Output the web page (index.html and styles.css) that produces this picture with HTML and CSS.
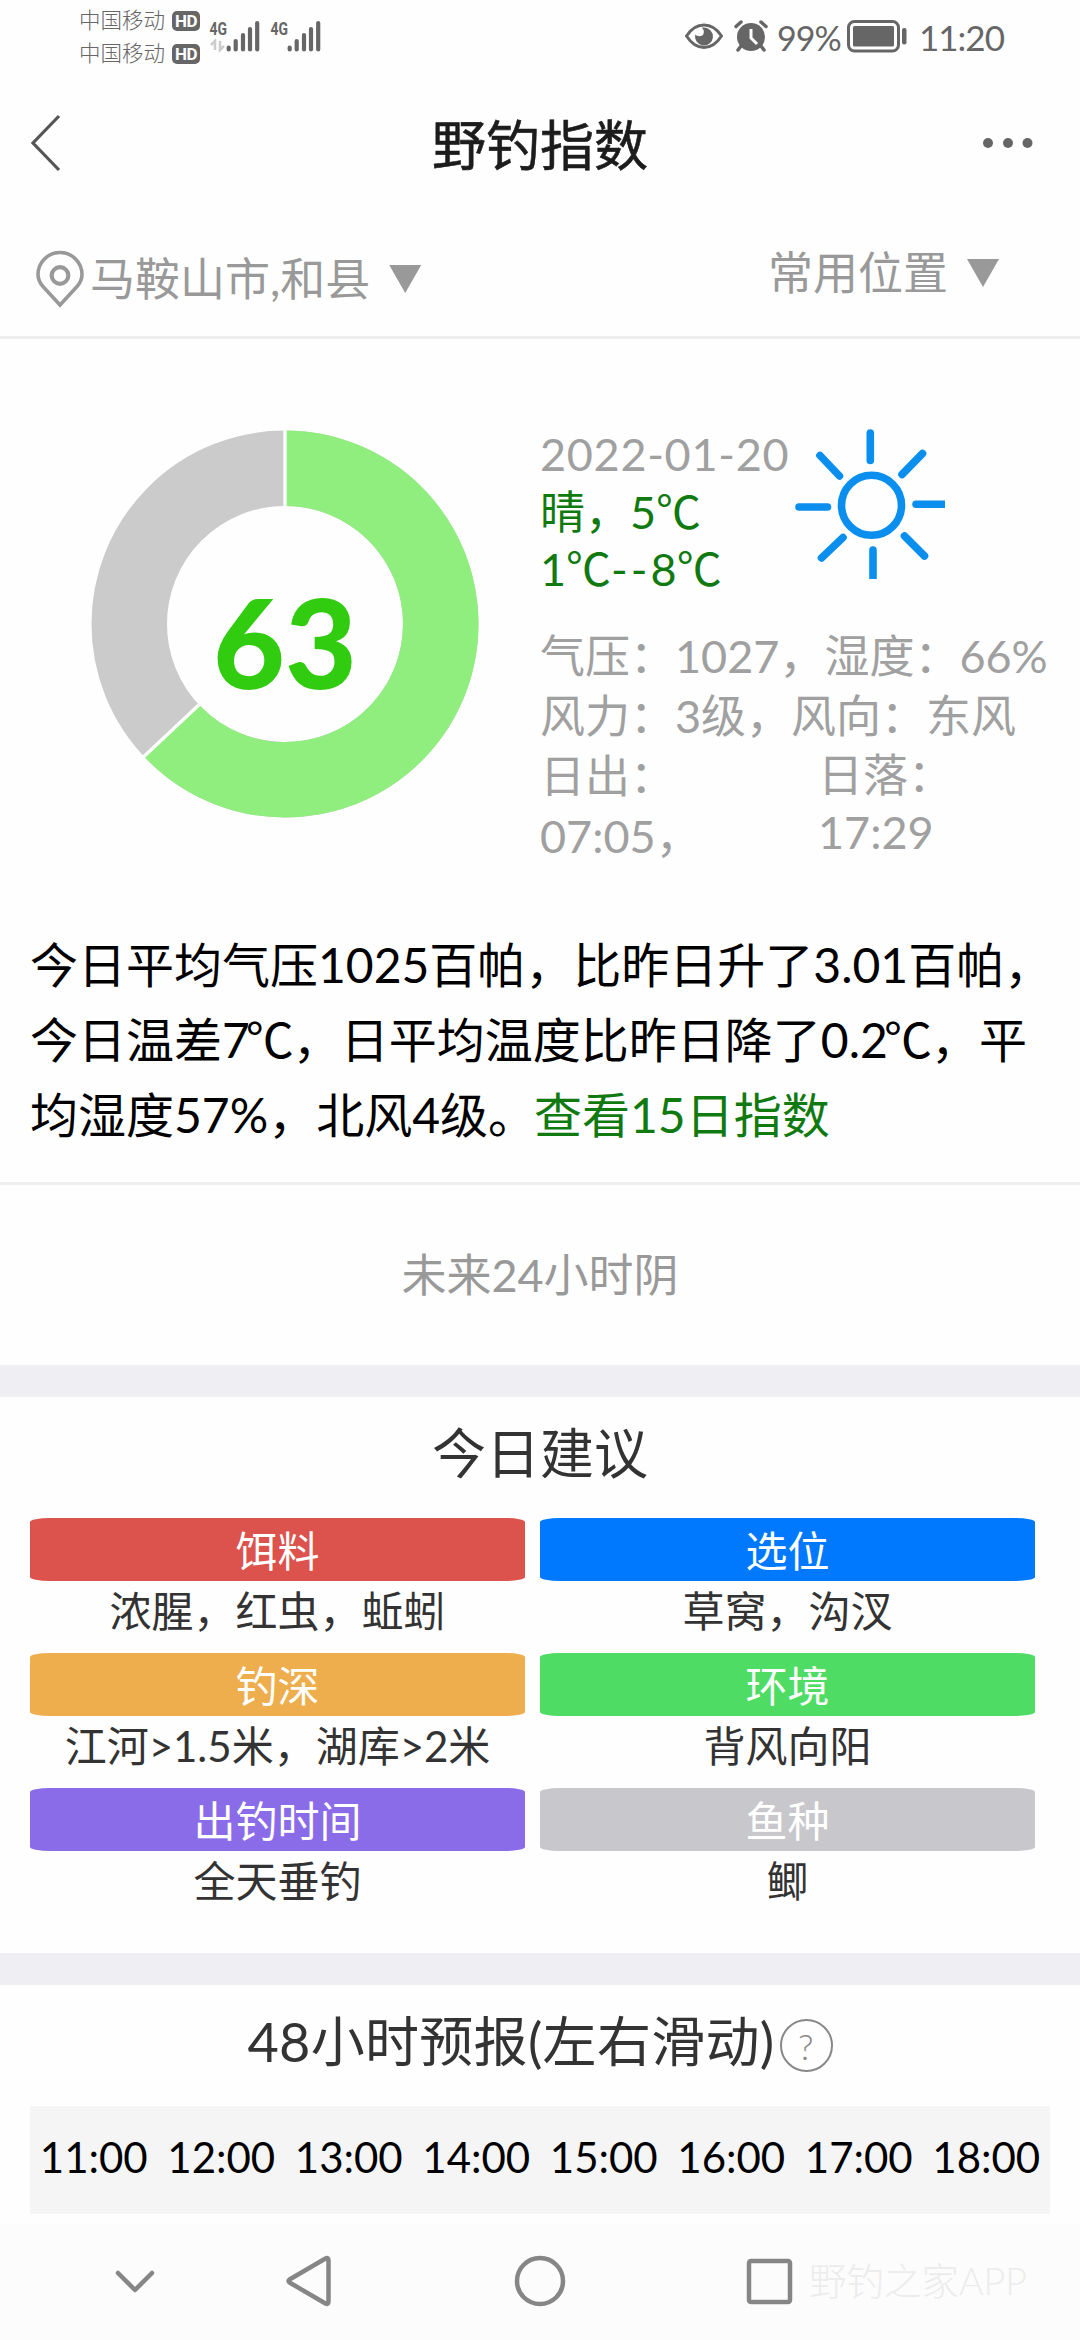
FILE: index.html
```html
<!DOCTYPE html>
<html lang="zh-CN">
<head>
<meta charset="utf-8">
<title>野钓指数</title>
<link rel="stylesheet" href="styles.css">
</head>
<body>
<div class="screen">
  <div class="status">
    <div class="carriers">
      <div class="carrier"><span>中国移动</span><b class="hd">HD</b></div>
      <div class="carrier"><span>中国移动</span><b class="hd">HD</b></div>
    </div>
    <svg class="signals" width="112" height="36" viewBox="210 18 112 36">
      <g class="net-label"><text x="210.5" y="35" textLength="17.5" lengthAdjust="spacingAndGlyphs">4G</text><text x="271.5" y="35" textLength="17.5" lengthAdjust="spacingAndGlyphs">4G</text></g>
      <g class="bars">
        <path d="M229.7 47.5v2M236.7 41v8.500M244 35v14.500M251 29v20.500M258.200 23v26.500"/>
        <path d="M290.700 47.500v2M297.700 41v8.500M305 35v14.500M312 29v20.500M319.200 23v26.500"/>
      </g>
      <path class="data" d="M216 50V41l-4 4M221 41v9l4-4"/>
    </svg>
    <div class="status-right">
      <svg class="eye" width="38" height="28" viewBox="0 0 38 28"><path d="M1.500 14C6 7 12 3 19 3s13 4 17.500 11C32 21 26 25.500 19 25.500S6 21 1.500 14z" fill="none" stroke="#666" stroke-width="3"/><path d="M19 5.500a9 9 0 1 1-8.800 7c2 2 6.500 2.500 8 0 1.300-2.500.7-5-1.400-6.700.7-.2 1.500-.3 2.200-.3z" fill="#666"/></svg>
      <svg class="alarm" width="34" height="32" viewBox="0 0 34 32"><circle cx="17" cy="17" r="14" fill="#666"/><path d="M2 6.500l5-4.500M32 6.500L27 2M7 26l-3 4M27 26l3 4" stroke="#666" stroke-width="3.500" stroke-linecap="round"/><path d="M17 9v9l6 6" fill="none" stroke="#fefefe" stroke-width="3"/></svg>
      <span class="pct">99%</span>
      <svg class="battery" width="60" height="33" viewBox="0 0 60 33"><rect x="1.500" y="1.500" width="50" height="29.500" rx="6" fill="none" stroke="#666" stroke-width="3"/><rect x="6" y="6" width="41" height="20.500" rx="1.500" fill="#666"/><rect x="55" y="8" width="4.500" height="16.500" rx="2" fill="#666"/></svg>
      <span class="clock">11:20</span>
    </div>
  </div>

  <header class="titlebar">
    <svg width="36" height="60" viewBox="0 0 36 60"><path d="M33 3L7 30l26 27" fill="none" stroke="#555" stroke-width="3.200"/></svg>
    <h1>野钓指数</h1>
    <svg width="54" height="14" viewBox="0 0 54 14" fill="#666"><circle cx="7" cy="7" r="5"/><circle cx="27" cy="7" r="5"/><circle cx="46.500" cy="7" r="5"/></svg>
  </header>

  <div class="places">
    <div class="place">
      <svg class="pin" width="50" height="58" viewBox="0 0 50 58" fill="none" stroke="#999" stroke-width="3.600"><path d="M25 55L8 36.500C4.500 32.500 3 29 3 24.500a22 22 0 0 1 44 0c0 4.500-1.500 8-5 12z"/><circle cx="25" cy="25.500" r="8.300" stroke-width="4.200"/></svg>
      <span>马鞍山市,和县</span><i class="tri"></i>
    </div>
    <div class="place saved"><span>常用位置</span><i class="tri"></i></div>
  </div>

  <section class="today">
    <svg class="donut" width="390" height="390" viewBox="-195 -195 390 390">
      <circle r="155.750" fill="none" stroke="#cbcbcb" stroke-width="75.500"/>
      <path d="M0-155.750A155.750 155.750 0 1 1-113.540 106.620" fill="none" stroke="#8fee7d" stroke-width="75.500"/>
      <path d="M0-115V-196M-83.800 78.700L-142.900 134.200" stroke="#fefefe" stroke-width="3.400"/>
      <text x="0" y="65" text-anchor="middle">63</text>
    </svg>
    <div class="weather">
      <div class="now">
        <div class="summary">
          <div class="date">2022-01-20</div>
          <div>晴，5℃</div>
          <div>1℃<span class="dash">--</span>8℃</div>
        </div>
        <svg class="sun" width="150" height="150" viewBox="795 429 150 150" fill="none" stroke="#0a8fee" stroke-width="7.600" stroke-linecap="round"><circle cx="871.500" cy="505.300" r="30"/><path d="M870.300 433v27.500M873 550v34M799 507h28.500M916 504.200h34M820 455.500l19.500 20.500M922.500 453.500L902 474.500M821.500 558L843 537.500M904.500 536l20 20"/></svg>
      </div>
      <div class="details">
        <div>气压：1027，湿度：66%</div>
        <div>风力：3级，风向：东风</div>
        <div class="sunrow">
          <div>日出：<br>07:05，</div>
          <div class="sunset">日落：<br>17:29</div>
        </div>
      </div>
    </div>
  </section>

  <p class="report">今日平均气压1025百帕，比昨日升了3.01百帕，<br>今日温差7<span class="unit">℃</span>，日平均温度比昨日降了0.2<span class="unit">℃</span>，平<br>均湿度57%，北风4级。<a>查看15日指数</a></p>
  <div class="next">未来24小时阴</div>

  <section class="block advice">
    <h2>今日建议</h2>
    <dl class="tips">
      <div><dt class="red">饵料</dt><dd>浓腥，红虫，蚯蚓</dd></div>
      <div><dt class="blue">选位</dt><dd>草窝，沟汊</dd></div>
      <div><dt class="orange">钓深</dt><dd>江河&gt;1.5米，湖库&gt;2米</dd></div>
      <div><dt class="green">环境</dt><dd>背风向阳</dd></div>
      <div><dt class="purple">出钓时间</dt><dd>全天垂钓</dd></div>
      <div><dt class="gray">鱼种</dt><dd>鲫</dd></div>
    </dl>
  </section>

  <section class="block forecast">
    <h2>48小时预报(左右滑动)<span class="help">?</span></h2>
    <div class="hours"><span>11:00</span><span>12:00</span><span>13:00</span><span>14:00</span><span>15:00</span><span>16:00</span><span>17:00</span><span>18:00</span></div>
  </section>

  <nav class="nav">
    <svg width="44" height="56" viewBox="0 0 44 56"><path d="M5 20l17 17 17-17"/></svg>
    <svg width="50" height="56" viewBox="0 0 50 56"><path d="M4.500 26.500Q2.500 28 4.500 29.500L40.500 50.500Q43.500 52 43.500 48.500V7.500Q43.500 4 40.500 5.500Z"/></svg>
    <svg width="54" height="56" viewBox="0 0 54 56"><circle cx="27" cy="28" r="23"/></svg>
    <svg width="50" height="56" viewBox="0 0 50 56"><rect x="5" y="8" width="41" height="41" rx="2"/></svg>
    <span class="mark">野钓之家APP</span>
  </nav>
</div>
</body>
</html>
```
FILE: styles.css
```css
* { box-sizing: border-box; margin: 0; padding: 0; }
body {
  width: 1080px;
  background: #fefefe;
  color: #333;
  font-family: Lato, "Noto Sans CJK SC", sans-serif;
}
.screen { display: flex; flex-direction: column; width: 1080px; height: 2340px; overflow: hidden; }
h1, h2 { font-weight: 400; }

.status { display: flex; align-items: flex-start; height: 84px; color: #666; }
.carriers { width: 130px; margin-left: 79px; padding-top: 4px; }
.carrier { display: flex; align-items: center; gap: 7px; height: 33px; font-size: 21.500px; line-height: 33px; font-weight: 300; }
.hd {
  width: 28px; height: 20px; border-radius: 5px; background: #666; color: #fefefe;
  font: 700 17px/20px Roboto, sans-serif; text-align: center; letter-spacing: -0.500px;
}
.signals { margin-top: 18px; }
.net-label { font: 700 19px Roboto, sans-serif; fill: #666; }
.bars { fill: none; stroke: #666; stroke-width: 4.200; stroke-linecap: round; }
.data { fill: none; stroke: #ccc; stroke-width: 2.500; }
.status-right { display: flex; margin-left: 364px; }
.status-right > * { flex: none; }
.eye { margin-top: 22px; }
.alarm { margin: 20px 0 0 11px; }
.pct { width: 79px; padding-left: 9px; font-size: 34px; line-height: 75px; letter-spacing: -1px; white-space: nowrap; }
.battery { margin-top: 20px; }
.clock { margin-left: 12px; font-size: 35px; line-height: 75px; letter-spacing: -1px; white-space: nowrap; }

.titlebar { display: flex; align-items: center; justify-content: space-between; height: 124px; padding: 0 45px 0 26px; }
.titlebar svg { position: relative; top: -3px; }
.titlebar h1 { margin-left: 37px; font-size: 54px; line-height: 124px; color: #1c1c1c; -webkit-text-stroke: 0.600px #1c1c1c; }

.places { display: flex; justify-content: space-between; height: 131px; border-bottom: 3px solid #eee; color: #999; font-size: 45px; }
.place { display: flex; align-items: center; height: 84px; margin: 29px 0 0 35px; line-height: 84px; }
.place span { margin-left: 5px; }
.pin { flex: none; }
.tri { width: 32px; height: 28px; margin-left: 19px; background: #999; clip-path: polygon(0 0, 100% 0, 50% 100%); }
.saved { margin: 23px 81px 0 0; }

.today { display: flex; height: 588px; }
.donut { flex: none; margin: 90px 0 0 90px; }
.donut text { font: 900 124px Lato, sans-serif; fill: #31cc10; }
.weather { padding-left: 60px; padding-top: 87px; font-size: 45px; color: #a0a0a0; white-space: nowrap; }
.now { display: flex; height: 200px; }
.summary { width: 255px; line-height: 57.500px; color: #107a10; }
.date { color: #a0a0a0; letter-spacing: 0.700px; }
.dash { letter-spacing: 3px; }
.sun { margin-top: 3px; }
.details { line-height: 60px; }
.sunrow { display: flex; }
.sunrow > div { width: 278px; }
.sunrow .sunset { line-height: 57px; padding-top: 1px; }

.report { height: 258px; padding-left: 30px; border-bottom: 3px solid #eee; font-size: 48px; line-height: 75px; color: #000; white-space: nowrap; }
.report a { margin-left: -2px; color: #107a10; }
.unit { margin: 0 -1px 0 -4px; }
.next { height: 180px; line-height: 180px; text-align: center; font-size: 45px; color: #999; }

.block { border-top: 32px solid #eeeef3; }
.block h2 { font-size: 54px; color: #333; text-align: center; white-space: nowrap; }
.advice { height: 588px; }
.advice h2 { height: 121px; line-height: 114px; }
.tips { display: grid; grid-template-columns: 495px 495px; column-gap: 15px; padding-left: 30px; }
.tips > div { height: 135px; text-align: center; font-size: 42px; }
.tips dt { height: 63px; line-height: 67px; border-radius: 20px / 4px; color: #fff; }
.tips dd { line-height: 61px; color: #333; }
.red { background: #dc524c; }
.blue { background: #0079ff; }
.orange { background: #eeae4e; }
.green { background: #4edc64; }
.purple { background: #8b6ce8; }
.gray { background: #c7c7cc; }

.forecast { height: 271px; }
.forecast h2 { display: flex; justify-content: center; align-items: flex-start; height: 121px; line-height: 113px; letter-spacing: 0.300px; }
.help { width: 53px; height: 53px; margin: 34px 0 0 5px; border: 2px solid #888; border-radius: 50%; font-size: 36px; line-height: 50px; color: #888; font-weight: 300; }
.hours { display: grid; grid-template-columns: repeat(8, 127.500px); height: 108px; margin-left: 30px; width: 1020px; background: #f5f5f5; color: #000; font-size: 42px; line-height: 103px; text-align: center; }

.nav { display: flex; align-items: flex-start; flex: 1; padding: 29px 0 0 113px; background: #fcfcfc; }
.nav svg { flex: none; fill: none; stroke: #868686; stroke-width: 4.500; stroke-linecap: round; stroke-linejoin: round; }
.nav svg:nth-child(2) { margin-left: 128px; }
.nav svg:nth-child(3) { margin-left: 178px; }
.nav svg:nth-child(4) { margin-left: 177px; }
.mark { margin-left: 15px; font-size: 37.500px; line-height: 56px; font-weight: 300; color: #ececec; white-space: nowrap; }
```
